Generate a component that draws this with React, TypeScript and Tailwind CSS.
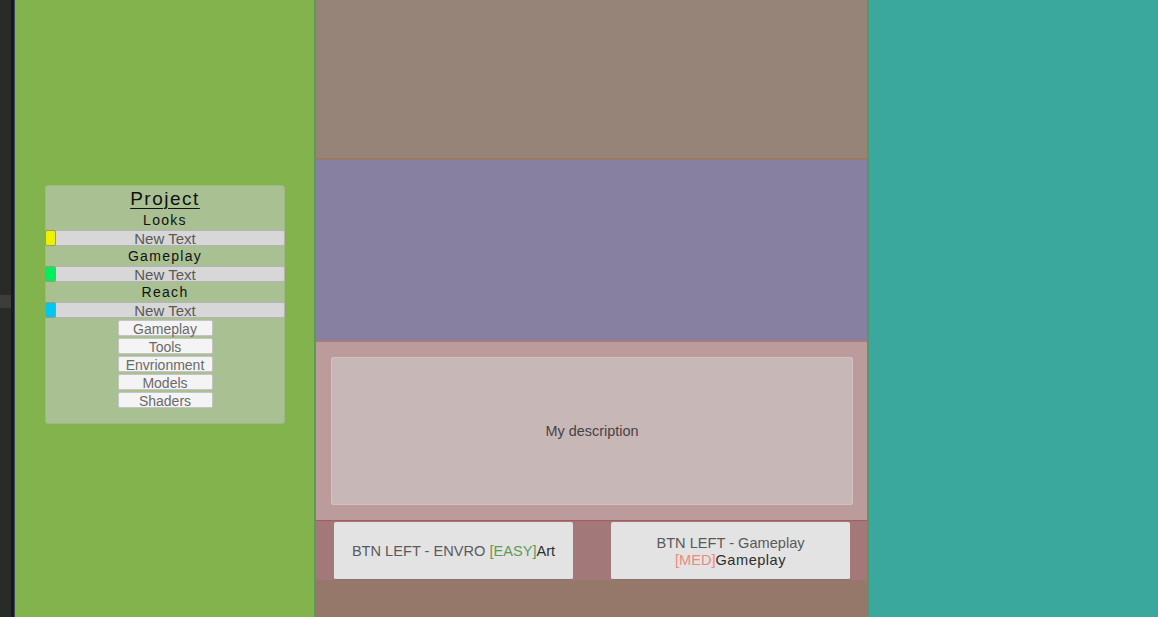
import React from "react";

const font = { fontFamily: '"Liberation Sans", Arial, sans-serif' };

function Bar({ color }: { color: string }) {
  return (
    <div className="relative -mx-[1px] flex h-[16px] items-center justify-center rounded-[2px] border border-[#b4b4b4] bg-[#d7d7d7] text-[15px] leading-none text-[#5a5a5a]">
      <div className={`absolute -left-[1px] -top-[1px] h-[16px] w-[11px] rounded-[2px] border border-[#9a9a6a] ${color}`} />
      New Text
    </div>
  );
}

function Label({ children }: { children: React.ReactNode }) {
  return (
    <div className="flex h-[20px] items-center justify-center text-[14px] leading-none tracking-[1.3px] text-[#111]">
      {children}
    </div>
  );
}

function SmallBtn({ children }: { children: React.ReactNode }) {
  return (
    <div className="flex h-[16px] w-[95px] items-center justify-center rounded-[2px] border border-[#c4c4c4] bg-[#f4f4f4] pt-[1px] text-[14px] leading-none text-[#6a6a6a]">
      {children}
    </div>
  );
}

export default function App() {
  return (
    <div className="flex h-[617px] w-[1158px] overflow-hidden" style={font}>
      <div className="flex w-[11px] flex-col bg-[#292b28]">
        <div className="h-[295px]" />
        <div className="h-[13px] bg-[#3d3d3c]" />
      </div>
      <div className="w-[3px] bg-[#18191b]" />
      <div className="w-[1px] bg-[#3a4b5a]" />
      <div className="flex w-[299px] flex-col bg-[#83b34c] pl-[30px] pt-[185px]">
        <div className="flex h-[239px] w-[240px] flex-col items-stretch rounded-[3px] border border-[#9fb888] bg-[#a9c093]">
          <div className="flex h-[24px] items-center justify-center text-[19px] leading-none tracking-[1.5px] text-[#111] underline decoration-1 underline-offset-[3px]">
            Project
          </div>
          <Label>Looks</Label>
          <Bar color="bg-[#eef200]" />
          <Label>Gameplay</Label>
          <Bar color="bg-[#00ef5f]" />
          <Label>Reach</Label>
          <Bar color="bg-[#00c6f2]" />
          <div className="mt-[2px] flex flex-col items-center gap-[2px]">
            <SmallBtn>Gameplay</SmallBtn>
            <SmallBtn>Tools</SmallBtn>
            <SmallBtn>Envrionment</SmallBtn>
            <SmallBtn>Models</SmallBtn>
            <SmallBtn>Shaders</SmallBtn>
          </div>
        </div>
      </div>
      <div className="w-[2px] bg-[#5c9a58]" />
      <div className="flex w-[551px] flex-col">
        <div className="h-[158px] bg-[#968479]" />
        <div className="h-[2px] bg-[#9c7868]" />
        <div className="h-[180px] bg-[#8880a0]" />
        <div className="h-[2px] bg-[#a67b7c]" />
        <div className="flex h-[178px] flex-col bg-[#bc9b9c] pb-[15px] pl-[15px] pr-[14px] pt-[15px]">
          <div className="flex flex-1 items-center justify-center rounded-[2px] border border-[#d0c2c2] bg-[#c8b7b7] pt-[2px] text-[14.4px] text-[#444]">
            My description
          </div>
        </div>
        <div className="h-[1px] bg-[#a65c5c]" />
        <div className="flex h-[59px] items-start bg-[#a37878] pl-[18px] pt-[1px]">
          <div className="flex h-[58px] w-[239px] items-center justify-center rounded-[2px] border-b border-[#8a7070] bg-[#e3e3e3] pt-[2px] text-[14.6px] text-[#5a5a5a]">
            <span>BTN LEFT - ENVRO </span>
            <span className="ml-[4px] text-[#5f9a5a]">[EASY]</span>
            <span className="text-[#2e2e2e]">Art</span>
          </div>
          <div className="ml-[38px] flex h-[58px] w-[239px] flex-col items-center justify-center rounded-[2px] border-b border-[#8a7070] bg-[#e3e3e3] pt-[2px] text-[14.6px] leading-[17px] text-[#5a5a5a]">
            <span>BTN LEFT - Gameplay</span>
            <span>
              <span className="text-[#ec8a80]">[MED]</span>
              <span className="tracking-[0.5px] text-[#2e2e2e]">Gameplay</span>
            </span>
          </div>
        </div>
        <div className="flex-1 bg-[#957869]" />
      </div>
      <div className="w-[2px] bg-[#4e9a6e]" />
      <div className="flex-1 bg-[#3ba89e]" />
    </div>
  );
}
